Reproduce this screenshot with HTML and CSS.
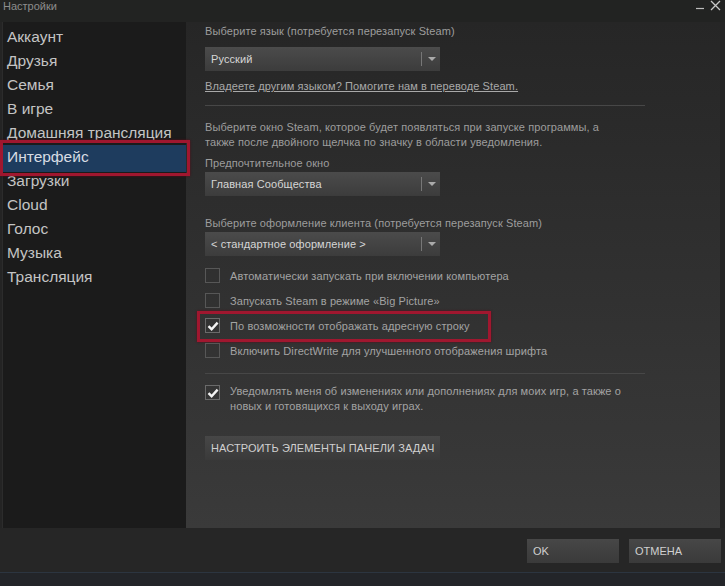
FILE: index.html
```html
<!DOCTYPE html>
<html>
    <head>
        <title>Настройки</title>
        <link rel="stylesheet" href="styles.css">
    </head>
    <body>
        <div class="Window">
            <div class="TitleBar">
                <span class="TitleText">Настройки</span>
                <div class="WinButtons">
                    <svg width="10" height="10" viewBox="0 0 10 10"><path d="M1 8.5H9" stroke="#bdbdbd" stroke-width="1.2"/></svg>
                    <svg width="11" height="11" viewBox="0 0 11 11"><path d="M1 1L10 10M10 1L1 10" stroke="#c8c8c8" stroke-width="1.3"/></svg>
                </div>
            </div>

            <div class="Main">
                <ul class="Sidebar">
                    <li>Аккаунт</li>
                    <li>Друзья</li>
                    <li>Семья</li>
                    <li>В игре</li>
                    <li>Домашняя трансляция</li>
                    <li class="Active">Интерфейс</li>
                    <li>Загрузки</li>
                    <li>Cloud</li>
                    <li>Голос</li>
                    <li>Музыка</li>
                    <li>Трансляция</li>
                </ul>

                <div class="Content">
                    <p class="Label">Выберите язык (потребуется перезапуск Steam)</p>
                    <div class="Select FirstSelect">
                        <span>Русский</span>
                        <span class="Arrow"></span>
                    </div>
                    <a class="Link" href="#">Владеете другим языком? Помогите нам в переводе Steam.</a>
                    <div class="Rule"></div>

                    <p class="Label Para">Выберите окно Steam, которое будет появляться при запуске программы, а<br>также после двойного щелчка по значку в области уведомления.</p>
                    <p class="Label Sub">Предпочтительное окно</p>
                    <div class="Select">
                        <span>Главная Сообщества</span>
                        <span class="Arrow"></span>
                    </div>

                    <p class="Label Skin">Выберите оформление клиента (потребуется перезапуск Steam)</p>
                    <div class="Select">
                        <span>&lt; стандартное оформление &gt;</span>
                        <span class="Arrow"></span>
                    </div>

                    <div class="Checks">
                        <div class="Check"><span class="Box"></span>Автоматически запускать при включении компьютера</div>
                        <div class="Check"><span class="Box"></span>Запускать Steam в режиме «Big Picture»</div>
                        <div class="Check Marked">
                            <span class="Box"><svg width="12" height="10" viewBox="0 0 12 10"><path d="M1.5 5.2L4.6 8.2L10.6 1.6" fill="none" stroke="#f2f2f2" stroke-width="2.4"/></svg></span>По возможности отображать адресную строку
                            <span class="Mark"></span>
                        </div>
                        <div class="Check"><span class="Box"></span>Включить DirectWrite для улучшенного отображения шрифта</div>
                    </div>

                    <div class="Rule Second"></div>

                    <div class="Check Notify">
                        <span class="Box"><svg width="12" height="10" viewBox="0 0 12 10"><path d="M1.5 5.2L4.6 8.2L10.6 1.6" fill="none" stroke="#f2f2f2" stroke-width="2.4"/></svg></span>
                        <span>Уведомлять меня об изменениях или дополнениях для моих игр, а также о<br>новых и готовящихся к выходу играх.</span>
                    </div>

                    <div class="Button Taskbar">НАСТРОИТЬ ЭЛЕМЕНТЫ ПАНЕЛИ ЗАДАЧ</div>
                </div>
            </div>

            <div class="Footer">
                <div class="Button Small">OK</div>
                <div class="Button Small">ОТМЕНА</div>
            </div>
            <div class="BottomLine"></div>
        </div>
    </body>
</html>
```

FILE: styles.css
```css
body {
    margin: 0;
    background-color: #232323;
    font-family: "Liberation Sans", Arial, "Noto Sans CJK SC", sans-serif;
    overflow: hidden;
}
.Window {
    width: 725px;
    height: 586px;
    display: flex;
    flex-direction: column;
    background-color: #242424;
}
.TitleBar {
    height: 22px;
    display: flex;
    justify-content: space-between;
    background-color: #222322;
}
.TitleText {
    font-size: 11px;
    color: #8d8d8d;
    padding-left: 3px;
    line-height: 13px;
}
.WinButtons {
    display: flex;
    gap: 5px;
    padding-right: 4px;
    align-items: flex-start;
}
.Main {
    display: flex;
    height: 506px;
}
/* left list */
.Sidebar {
    list-style-type: none;
    margin: 0 0 0 2px;
    padding: 3px 0 0 0;
    width: 183px;
    background-color: #1b1b1b;
    border-left: 1px solid #2c2c2c;
}
.Sidebar li {
    height: 24px;
    line-height: 24px;
    padding-left: 4px;
    font-size: 15.5px;
    color: #c4c4c4;
    white-space: nowrap;
}
.Sidebar .Active {
    position: relative;
    background-color: #1e3c5e;
    color: #d8dde4;
    height: 27px;
    margin-bottom: -3px;
}
/* the red annotation frame */
.Sidebar .Active::after {
    content: "";
    position: absolute;
    left: -3px;
    top: -5px;
    right: -4px;
    bottom: -4px;
    border: 3px solid #a0172f;
    box-shadow: 0 0 2px #5a0c18;
}
.Content {
    flex: 1;
    margin-right: 5px;
    padding: 2px 0 0 19px;
    background: linear-gradient(#262626, #3a3a3a);
    letter-spacing: 0.1px;
}
.Label {
    margin: 0;
    font-size: 11px;
    line-height: 15px;
    color: #9d9d9d;
    white-space: nowrap;
}
.Select {
    width: 235px;
    height: 24px;
    margin-top: 1px;
    display: flex;
    align-items: center;
    justify-content: space-between;
    background: linear-gradient(#4b4b4b, #3c3c3c);
    font-size: 11px;
    color: #d6d6d6;
    padding-left: 6px;
    box-sizing: border-box;
}
.FirstSelect {
    margin-top: 8px;
}
.Arrow {
    position: relative;
    width: 18px;
    height: 14px;
    border-left: 1px solid #777;
}
.Arrow::after {
    content: "";
    position: absolute;
    left: 6px;
    top: 5px;
    border-left: 4px solid transparent;
    border-right: 4px solid transparent;
    border-top: 4px solid #aaa;
}
.Link {
    display: block;
    margin-top: 8px;
    font-size: 11px;
    line-height: 14px;
    color: #a9a9a9;
    text-decoration: underline;
}
.Rule {
    width: 440px;
    height: 1px;
    margin-top: 12px;
    background-color: #474747;
}
.Para {
    margin-top: 14px;
}
.Sub {
    margin-top: 6px;
}
.Skin {
    margin-top: 20px;
}
.Checks {
    margin-top: 7px;
}
.Check {
    position: relative;
    height: 25px;
    display: flex;
    align-items: center;
    gap: 10px;
    font-size: 11px;
    color: #a3a3a3;
    white-space: nowrap;
}
.Box {
    width: 13px;
    height: 13px;
    border: 1px solid #575757;
    display: flex;
    align-items: center;
    justify-content: center;
    flex: none;
}
.Marked .Box,
.Notify .Box {
    border-color: #6a6a6a;
}
/* red frame around the marked option */
.Mark {
    position: absolute;
    left: -8px;
    top: -2px;
    width: 288px;
    height: 25px;
    border: 3px solid #a0172f;
    box-shadow: 0 0 2px #5a0c18;
}
.Second {
    margin-top: 10px;
}
.Notify {
    height: auto;
    margin-top: 10px;
    align-items: flex-start;
    line-height: 15px;
}
.Notify .Box {
    margin-top: 1px;
}
.Button {
    background: linear-gradient(#474747, #3a3a3a);
    color: #d0d0d0;
    font-size: 11px;
    height: 24px;
    line-height: 24px;
    padding-left: 6px;
    box-sizing: border-box;
}
.Taskbar {
    width: 235px;
    margin-top: 22px;
}
.Footer {
    height: 44px;
    display: flex;
    justify-content: flex-end;
    gap: 10px;
    padding: 11px 4px 0 0;
    box-sizing: border-box;
    background-color: #262626;
}
.Small {
    width: 92px;
}
.BottomLine {
    flex: 1;
    border-top: 1px solid #2c3540;
    background-color: #232529;
}
```
